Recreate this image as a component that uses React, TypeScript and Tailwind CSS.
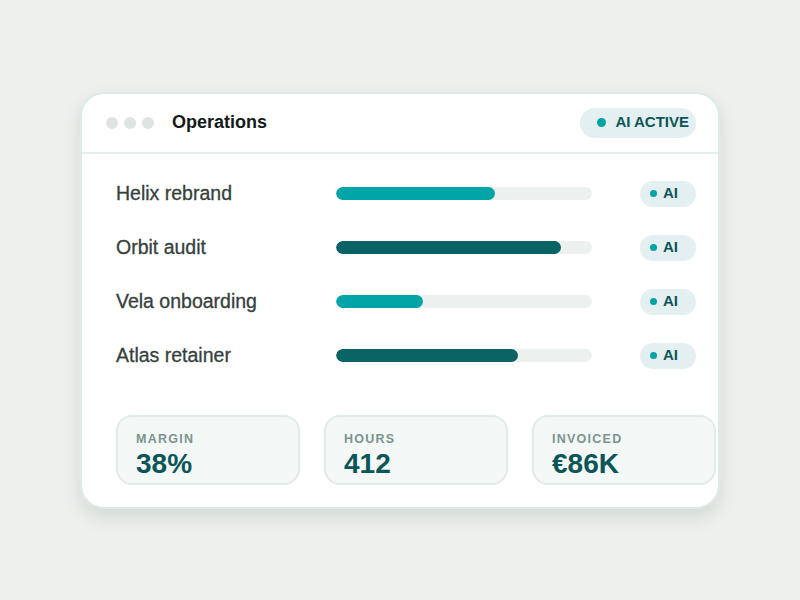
const rows = [
  { name: 'Helix rebrand', pct: 62, color: 'bg-[#00a3a6]' },
  { name: 'Orbit audit', pct: 88, color: 'bg-[#0a6466]' },
  { name: 'Vela onboarding', pct: 34, color: 'bg-[#00a3a6]' },
  { name: 'Atlas retainer', pct: 71, color: 'bg-[#0a6466]' },
];

const stats = [
  { label: 'MARGIN', value: '38%' },
  { label: 'HOURS', value: '412' },
  { label: 'INVOICED', value: '€86K' },
];

export default function App() {
  return (
    <div
      className="flex h-screen w-full items-center justify-center bg-[#eef0ee]"
      style={{ fontFamily: '"Liberation Sans", Arial, sans-serif' }}
    >
      <div className="w-[640px] rounded-[24px] border-2 border-[#dde9e5] bg-white shadow-[0_8px_18px_rgba(70,100,90,0.16)]">
        {/* Header */}
        <div className="flex h-[60px] items-center border-b-2 border-[#e6eeec] pl-[24px] pr-[22px]">
          <div className="flex gap-[6px]">
            <span className="h-[12px] w-[12px] rounded-full bg-[#dfe4e3]" />
            <span className="h-[12px] w-[12px] rounded-full bg-[#dfe4e3]" />
            <span className="h-[12px] w-[12px] rounded-full bg-[#dfe4e3]" />
          </div>
          <span className="ml-[18px] text-[18px] font-bold text-[#141a19]">Operations</span>
          <div className="ml-auto flex h-[30px] items-center gap-[9px] rounded-full bg-[#e3eff0] pl-[17px] pr-[7px]">
            <span className="h-[9px] w-[9px] rounded-full bg-[#00a3a6]" />
            <span className="text-[15px] font-bold text-[#0b5558]">AI ACTIVE</span>
          </div>
        </div>

        {/* Rows */}
        <div className="pl-[34px] pr-[22px] pt-[13px]">
          {rows.map((r) => (
            <div key={r.name} className="flex h-[54px] items-center">
              <span className="w-[220px] text-[19.5px] text-[#363f3d] [-webkit-text-stroke:0.3px_#363f3d]">{r.name}</span>
              <div className="h-[13px] w-[256px] overflow-hidden rounded-full bg-[#ecf0ee]">
                <div className={`h-full rounded-full ${r.color}`} style={{ width: `${r.pct}%` }} />
              </div>
              <div className="ml-auto flex h-[26px] w-[56px] items-center gap-[6px] rounded-full bg-[#e3eff0] pl-[10px]">
                <span className="h-[7px] w-[7px] rounded-full bg-[#00a3a6]" />
                <span className="text-[15px] font-bold text-[#0b5558]">AI</span>
              </div>
            </div>
          ))}
        </div>

        {/* Stats */}
        <div className="mt-[32px] flex gap-[24px] pb-[22px] pl-[34px]">
          {stats.map((s) => (
            <div
              key={s.label}
              className="h-[70px] w-[184px] shrink-0 rounded-[16px] border-2 border-[#e1ebe8] bg-[#f3f7f6] pl-[18px] pt-[15px]"
            >
              <div className="text-[12.5px] font-bold leading-[15px] tracking-[0.1em] text-[#7b9490]">{s.label}</div>
              <div className="mt-[1px] text-[28px] font-bold leading-[31px] text-[#0b5558]">{s.value}</div>
            </div>
          ))}
        </div>
      </div>
    </div>
  );
}
